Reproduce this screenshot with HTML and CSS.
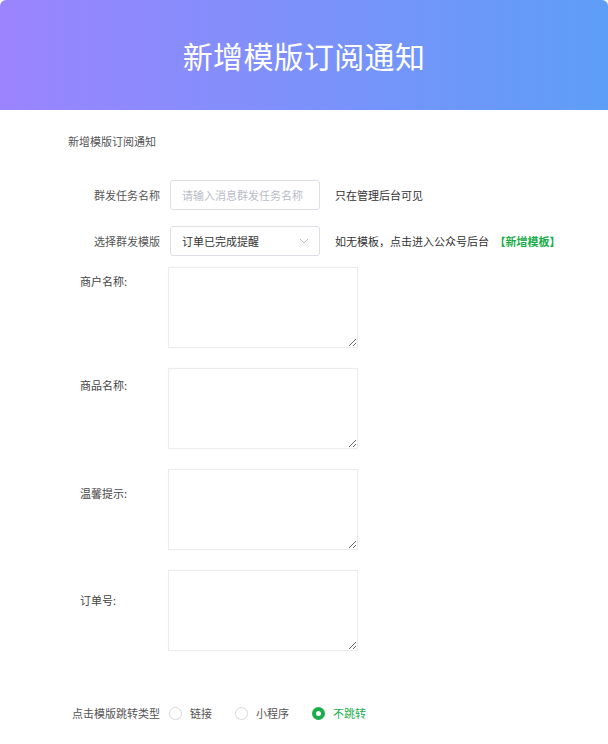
FILE: index.html
```html
<!DOCTYPE html>
<html lang="zh-CN">
<head>
  <meta charset="UTF-8" />
  <meta name="viewport" content="width=device-width, initial-scale=1.0"/>
  <title>新增模版订阅通知</title>
  <link rel="stylesheet" href="styles.css">
</head>
<body>
  <header class="banner">
    <h1>新增模版订阅通知</h1>
  </header>

  <main class="content">
    <div class="subtitle">新增模版订阅通知</div>

    <div class="row row-first">
      <label class="row-label">群发任务名称</label>
      <input class="text-input" type="text" placeholder="请输入消息群发任务名称">
      <span class="row-note">只在管理后台可见</span>
    </div>

    <div class="row row-select">
      <label class="row-label">选择群发模版</label>
      <div class="fake-select">
        <span>订单已完成提醒</span>
        <svg width="10" height="6" viewBox="0 0 10 6"><path d="M1 1l4 4 4-4" fill="none" stroke="#bbb" stroke-width="1"/></svg>
      </div>
      <span class="row-note">如无模板，点击进入公众号后台 <a class="link-green" href="#">【新增模板】</a></span>
    </div>

    <div class="area-row area-first">
      <label class="area-label off-1">商户名称:</label>
      <textarea></textarea>
    </div>
    <div class="area-row">
      <label class="area-label off-2">商品名称:</label>
      <textarea></textarea>
    </div>
    <div class="area-row">
      <label class="area-label off-3">温馨提示:</label>
      <textarea></textarea>
    </div>
    <div class="area-row">
      <label class="area-label off-4">订单号:</label>
      <textarea></textarea>
    </div>

    <div class="row row-radio">
      <label class="row-label">点击模版跳转类型</label>
      <div class="radio-group">
        <label class="radio"><span class="dot"></span>链接</label>
        <label class="radio"><span class="dot"></span>小程序</label>
        <label class="radio checked"><span class="dot"></span>不跳转</label>
      </div>
    </div>
  </main>
</body>
</html>
```

FILE: styles.css
```css
body {
  margin: 0;
  font-family: "Noto Sans CJK SC", "Noto Sans", sans-serif;
  background: #fff;
  color: #333;
}

.banner {
  height: 110px;
  display: flex;
  align-items: center;
  justify-content: center;
  background: linear-gradient(90deg, #9b84fe, #5e9ef7);
  border-radius: 6px 6px 0 0;
}

.banner h1 {
  margin: 0;
  color: #fff;
  font-size: 30px;
  font-weight: 400;
  line-height: 40px;
  letter-spacing: 0.3px;
}

.content {
  padding-left: 68px;
  font-size: 11px;
}

.subtitle {
  margin-top: 23px;
  line-height: 16px;
  color: #555;
}

.row {
  display: flex;
  align-items: center;
}

.row-first {
  margin-top: 31px;
}

.row-select {
  margin-top: 16px;
}

.row-label {
  width: 92px;
  margin-right: 10px;
  text-align: right;
  color: #555;
  line-height: 16px;
}

.text-input {
  box-sizing: border-box;
  width: 150px;
  height: 30px;
  padding: 0 11px;
  border: 1px solid #dcdfe6;
  border-radius: 3px;
  font-family: inherit;
  font-size: 11px;
  color: #333;
  outline: none;
}

.text-input::placeholder {
  color: #b8bcc6;
}

.fake-select {
  box-sizing: border-box;
  width: 150px;
  height: 30px;
  padding: 0 10px 0 11px;
  border: 1px solid #dcdfe6;
  border-radius: 3px;
  display: flex;
  align-items: center;
  justify-content: space-between;
  color: #333;
}

.row-note {
  margin-left: 15px;
  color: #333;
}

.link-green {
  color: #1aad4b;
  font-weight: 700;
  text-decoration: none;
  margin-left: 3px;
}

.area-row {
  display: flex;
  align-items: flex-start;
  margin-top: 20px;
}

.area-first {
  margin-top: 11px;
}

.area-label {
  box-sizing: border-box;
  width: 100px;
  padding-left: 12px;
  color: #444;
  line-height: 16px;
}

.off-1 { padding-top: 6px; }
.off-2 { padding-top: 9px; }
.off-3 { padding-top: 16px; }
.off-4 { padding-top: 22px; }

textarea {
  box-sizing: border-box;
  width: 190px;
  height: 81px;
  margin: 0;
  border: 1px solid #ececec;
  box-shadow: 0 0 2px rgba(0,0,0,0.03);
  font-family: inherit;
}

.row-radio {
  margin-top: 54px;
}

.radio-group {
  display: flex;
  gap: 23px;
  margin-left: -1px;
}

.radio {
  display: flex;
  align-items: center;
  gap: 8px;
  color: #555;
  line-height: 16px;
}

.radio .dot {
  box-sizing: border-box;
  width: 13px;
  height: 13px;
  border: 1px solid #d5d8de;
  border-radius: 50%;
  background: #fff;
}

.radio.checked {
  color: #1aad4b;
}

.radio.checked .dot {
  border: 4px solid #1aad4b;
}
```
